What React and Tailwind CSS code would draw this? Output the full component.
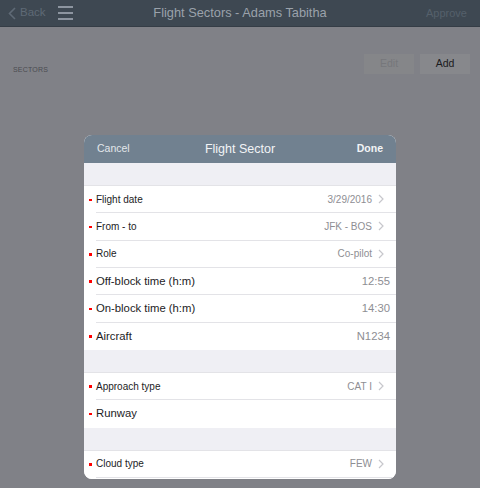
import React from 'react';

const Chevron = () => (
    <svg width="6" height="10" viewBox="0 0 6 10" className="ml-[6px] shrink-0">
        <path d="M1 1l4 4-4 4" fill="none" stroke="#c7c7cc" strokeWidth="1.2" />
    </svg>
);

const Row = ({ label, value, chevron, large, last }) => (
    <div className="h-[27.33px] shrink-0 flex items-center bg-white relative">
        <span className="absolute left-[5px] top-[12.5px] w-[2.5px] h-[2.5px] bg-[#ff0000]" />
        <div className={`ml-[12px] flex-1 h-full flex items-center ${chevron ? 'pr-[12px]' : 'pr-[6px]'} ${last ? '' : 'border-b border-[#e3e3e7]'}`}>
            <span className={`flex-1 text-[#1c1c1e] ${large ? 'text-[11.3px]' : 'text-[10px]'}`}>{label}</span>
            {value && (
                <span className={`text-[#8e8e93] ${large ? 'text-[11.3px]' : 'text-[10px]'}`}>{value}</span>
            )}
            {chevron && <Chevron />}
        </div>
    </div>
);

const Gap = () => <div className="h-[23px] shrink-0 bg-[#efeff4] border-b border-[#e3e3e7]" />;

export default function App() {
    return (
        <div className="w-[480px] h-[488px] relative bg-[#808187] overflow-hidden" style={{ fontFamily: '"Liberation Sans", Arial, sans-serif' }}>
            {/* Nav bar */}
            <div className="h-[27px] bg-[#3e4852] border-b border-[#353d46] flex items-center relative">
                <div className="flex items-center pl-[8px] text-[#5f6a76]">
                    <svg width="8" height="13" viewBox="0 0 8 13">
                        <path d="M7 1L1.5 6.5 7 12" fill="none" stroke="#5f6a76" strokeWidth="1.6" />
                    </svg>
                    <span className="ml-[4px] text-[11.5px]">Back</span>
                </div>
                <div className="ml-[12px] flex flex-col gap-[4px]">
                    <span className="w-[15px] h-[2px] bg-[#8d95a0]" />
                    <span className="w-[15px] h-[2px] bg-[#8d95a0]" />
                    <span className="w-[15px] h-[2px] bg-[#8d95a0]" />
                </div>
                <div className="absolute left-0 right-0 text-center text-[12.8px] text-[#9ba2ab] pointer-events-none">
                    Flight Sectors - Adams Tabitha
                </div>
                <span className="ml-auto mr-[13px] text-[11px] text-[#55606b]">Approve</span>
            </div>

            {/* Page content */}
            <div className="flex items-center justify-between pl-[13px] pr-[10px] mt-[25px]">
                <span className="text-[7px] text-[#4b4c51] tracking-[0.2px] mt-[13px]">SECTORS</span>
                <div className="flex gap-[6px]">
                    <div className="w-[50px] h-[20px] bg-[#858689] flex items-center justify-center text-[10.5px] text-[#76777b]">Edit</div>
                    <div className="w-[50px] h-[20px] bg-[#87888c] flex items-center justify-center text-[10.5px] text-[#1b1b1d]">Add</div>
                </div>
            </div>

            {/* Modal sheet */}
            <div className="absolute left-[84px] top-[135px] w-[312px] h-[344px] rounded-[8px] overflow-hidden bg-white flex flex-col">
                <div className="h-[28px] shrink-0 bg-[#718190] flex items-center justify-between px-[13px] relative">
                    <span className="text-[10.5px] text-[#e3e7eb]">Cancel</span>
                    <span className="absolute left-0 right-0 text-center text-[12.5px] text-[#f2f4f6] pointer-events-none">Flight Sector</span>
                    <span className="text-[10.5px] font-bold text-[#f2f4f6]">Done</span>
                </div>
                <Gap />
                <Row label="Flight date" value="3/29/2016" chevron />
                <Row label="From - to" value="JFK - BOS" chevron />
                <Row label="Role" value="Co-pilot" chevron />
                <Row label="Off-block time (h:m)" value="12:55" large />
                <Row label="On-block time (h:m)" value="14:30" large />
                <Row label="Aircraft" value="N1234" large last />
                <Gap />
                <Row label="Approach type" value="CAT I" chevron />
                <Row label="Runway" large last />
                <Gap />
                <Row label="Cloud type" value="FEW" chevron />
                <div className="h-[8px] shrink-0 bg-white" />
            </div>
        </div>
    );
}
